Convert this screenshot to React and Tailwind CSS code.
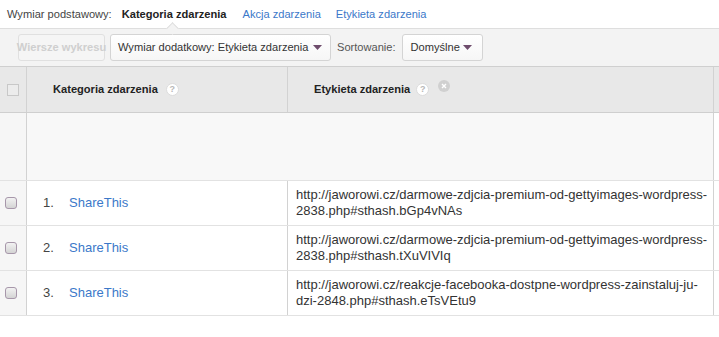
import React from 'react';

const rows = [
  { n: '1.', name: 'ShareThis', url: ['http://jaworowi.cz/darmowe-zdjcia-premium-od-gettyimages-wordpress-', '2838.php#sthash.bGp4vNAs'] },
  { n: '2.', name: 'ShareThis', url: ['http://jaworowi.cz/darmowe-zdjcia-premium-od-gettyimages-wordpress-', '2838.php#sthash.tXuVIVIq'] },
  { n: '3.', name: 'ShareThis', url: ['http://jaworowi.cz/reakcje-facebooka-dostpne-wordpress-zainstaluj-ju-', 'dzi-2848.php#sthash.eTsVEtu9'] },
];

const Help = () => (
  <span className="inline-flex items-center justify-center w-[13px] h-[13px] rounded-full bg-white border border-[#dcdcdc] text-[9px] font-bold text-[#b8b8b8] leading-none">?</span>
);

const Caret = () => (
  <svg width="9" height="5" viewBox="0 0 9 5" className="ml-auto shrink-0">
    <path d="M0 0h9L4.5 5z" fill="#6e4c6c" />
  </svg>
);

const Box = () => (
  <div className="w-[12px] h-[12px] rounded-[3px] border border-[#a797aa] bg-gradient-to-b from-[#f2f2f2] to-[#d4d4d4]" />
);

export default function App() {
  return (
    <div className="w-[719px] h-[337px] bg-white overflow-hidden text-[#333] font-['Liberation_Sans',Arial,sans-serif]">
      {/* primary dimension bar */}
      <div className="relative h-[29px] flex items-center pl-[7px] text-[11.1px] border-b border-[#dedede] whitespace-nowrap">
        <span className="text-[#444]">Wymiar podstawowy:</span>
        <span className="ml-[10px] font-bold text-[#222]">Kategoria zdarzenia</span>
        <span className="ml-[16px] text-[#3b78c9]">Akcja zdarzenia</span>
        <span className="ml-[15px] text-[#3b78c9]">Etykieta zdarzenia</span>
        <div className="absolute left-[168px] bottom-[-5px] w-[9px] h-[9px] rotate-45 bg-[#f3f3f3] border-l border-t border-[#dedede]" />
      </div>

      {/* toolbar */}
      <div className="h-[37px] bg-[#f3f3f3] flex items-center pl-[18px] text-[11.1px] whitespace-nowrap">
        <div className="h-[27px] w-[87px] flex items-center justify-center rounded-[3px] border border-[#e0e0e0] bg-[#f5f5f5] text-[#cfcfcf] font-bold">
          Wiersze wykresu
        </div>
        <div className="ml-[5px] h-[27px] w-[221px] flex items-center pl-[7px] pr-[8px] rounded-[3px] border border-[#d4d4d4] bg-gradient-to-b from-white to-[#f6f6f6] text-[#333]">
          Wymiar dodatkowy: Etykieta zdarzenia
          <Caret />
        </div>
        <span className="ml-[6px] text-[#555]">Sortowanie:</span>
        <div className="ml-[6px] h-[27px] w-[81px] flex items-center pl-[8px] pr-[10px] rounded-[3px] border border-[#d4d4d4] bg-gradient-to-b from-white to-[#f6f6f6] text-[#333]">
          Domyślne
          <Caret />
        </div>
      </div>

      {/* table */}
      <div className="border-t border-[#cfcfcf]">
        <div className="flex h-[46px] bg-[#e8e8e8] border-b border-[#cfcfcf] text-[11.1px] text-[#222] font-bold whitespace-nowrap">
          <div className="w-[27px] shrink-0 border-r border-[#d2d2d2] flex items-center justify-center">
            <div className="w-[12px] h-[12px] border border-[#c8c8c8] bg-[#ececec]" />
          </div>
          <div className="w-[261px] shrink-0 border-r border-[#d2d2d2] flex items-center gap-[8px] pl-[26px]">
            Kategoria zdarzenia <Help />
          </div>
          <div className="w-[426px] shrink-0 border-r border-[#d2d2d2] flex items-center pl-[26px]">
            Etykieta zdarzenia
            <span className="ml-[6px] flex"><Help /></span>
            <span className="ml-[9px] -mt-[8px] inline-flex items-center justify-center w-[12px] h-[12px] rounded-full bg-[#d0d0d0]">
              <svg width="6" height="6" viewBox="0 0 6 6"><path d="M1 1l4 4M5 1L1 5" stroke="#fff" strokeWidth="1.4" /></svg>
            </span>
          </div>
          <div className="flex-1" />
        </div>

        <div className="flex h-[68px] border-b border-[#e2e2e2]">
          <div className="w-[27px] shrink-0 bg-[#f6f6f6] border-r border-[#d2d2d2]" />
          <div className="w-[687px] shrink-0 bg-[#f8f8f8] border-r border-[#d2d2d2]" />
          <div className="flex-1" />
        </div>

        {rows.map((r) => (
          <div key={r.n} className="flex h-[45px] border-b border-[#e2e2e2] text-[13px]">
            <div className="w-[27px] shrink-0 bg-[#f6f6f6] border-r border-[#d2d2d2] flex items-center pl-[5px]">
              <Box />
            </div>
            <div className="w-[261px] shrink-0 border-r border-[#d2d2d2] flex items-center pl-[16px]">
              <span className="w-[26px] text-[#444]">{r.n}</span>
              <span className="text-[#3b78c9]">{r.name}</span>
            </div>
            <div className="w-[426px] shrink-0 border-r border-[#d2d2d2] flex flex-col justify-center pl-[8px] leading-[16px] text-[#333] whitespace-nowrap">
              <span>{r.url[0]}</span>
              <span>{r.url[1]}</span>
            </div>
            <div className="flex-1" />
          </div>
        ))}
      </div>
    </div>
  );
}
